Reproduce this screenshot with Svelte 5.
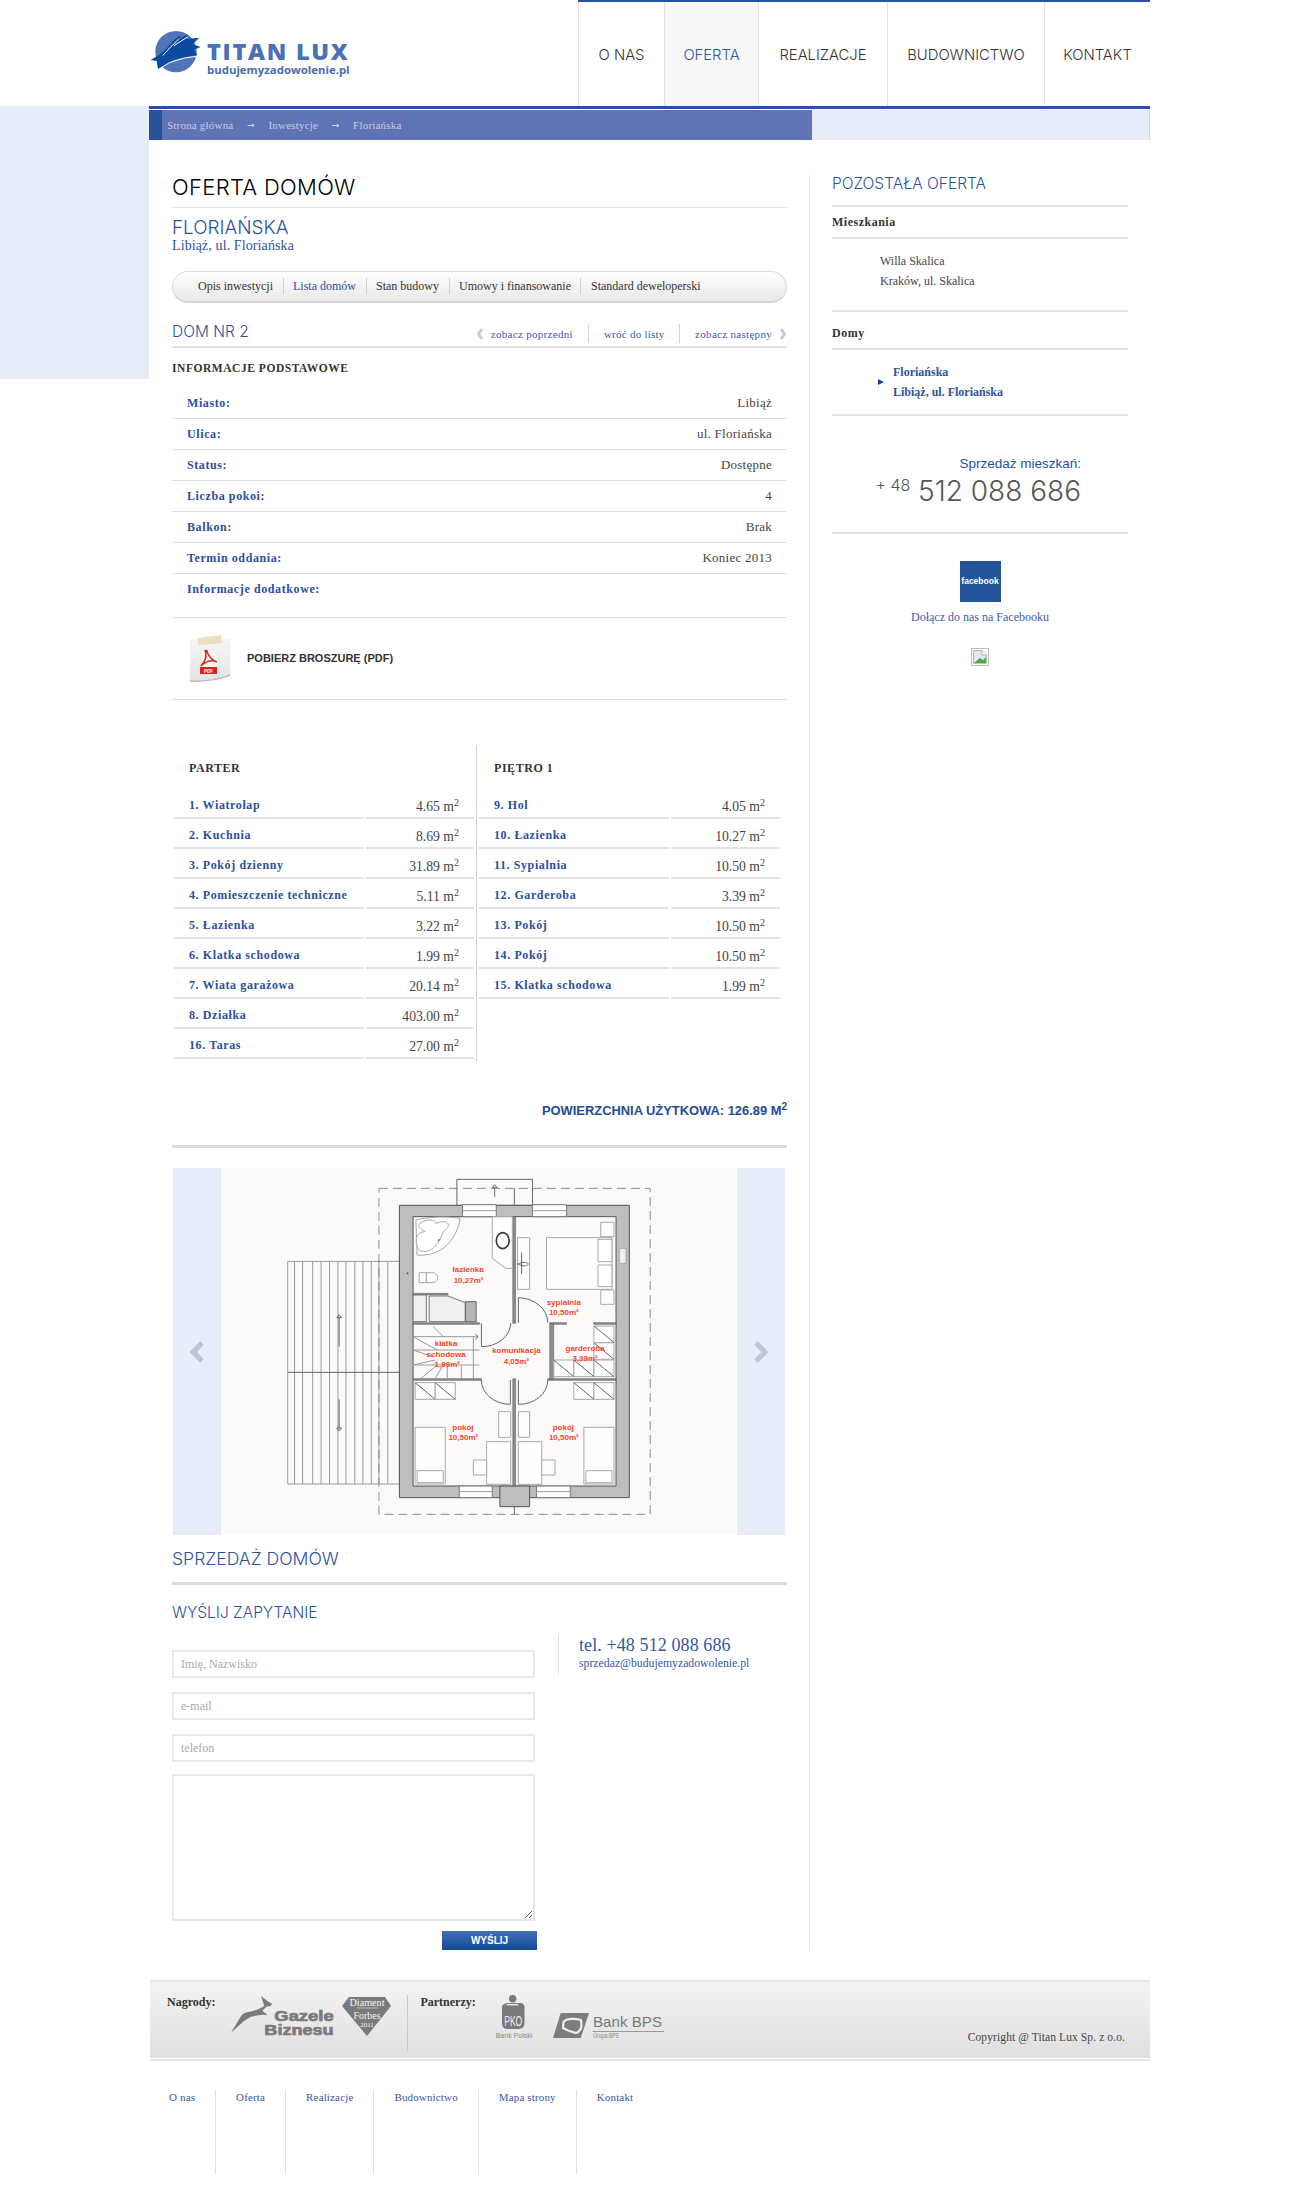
<script>
  const nav = ['O NAS', 'OFERTA', 'REALIZACJE', 'BUDOWNICTWO', 'KONTAKT'];
  const tabs = ['Opis inwestycji', 'Lista domów', 'Stan budowy', 'Umowy i finansowanie', 'Standard deweloperski'];
  const info = [
    ['Miasto:', 'Libiąż'], ['Ulica:', 'ul. Floriańska'], ['Status:', 'Dostępne'],
    ['Liczba pokoi:', '4'], ['Balkon:', 'Brak'], ['Termin oddania:', 'Koniec 2013']
  ];
  const parter = [
    ['1. Wiatrołap', '4.65'], ['2. Kuchnia', '8.69'], ['3. Pokój dzienny', '31.89'],
    ['4. Pomieszczenie techniczne', '5.11'], ['5. Łazienka', '3.22'], ['6. Klatka schodowa', '1.99'],
    ['7. Wiata garażowa', '20.14'], ['8. Działka', '403.00'], ['16. Taras', '27.00']
  ];
  const pietro = [
    ['9. Hol', '4.05'], ['10. Łazienka', '10.27'], ['11. Sypialnia', '10.50'], ['12. Garderoba', '3.39'],
    ['13. Pokój', '10.50'], ['14. Pokój', '10.50'], ['15. Klatka schodowa', '1.99']
  ];
  const floors = [
    { name: 'PARTER', rows: parter, cls: 'first' },
    { name: 'PIĘTRO 1', rows: pietro, cls: 'second' }
  ];
  const footerNav = ['O nas', 'Oferta', 'Realizacje', 'Budownictwo', 'Mapa strony', 'Kontakt'];
  const terrace = [310, 330, 355, 376, 397, 418, 438, 460, 480, 501, 520, 542];
  const planLabels = [
    ['łazienka', 742, 328], ['10,27m²', 743, 360], ['sypialnia', 980, 425], ['10,50m²', 980, 456],
    ['klatka', 687, 549], ['schodowa', 687, 581], ['1,99m²', 690, 613], ['komunikacja', 862, 571],
    ['4,05m²', 862, 602], ['garderoba', 1033, 563], ['3,39m²', 1033, 594], ['pokój', 729, 802],
    ['10,50m²', 730, 832], ['pokój', 979, 800], ['10,50m²', 980, 830]
  ].map(([t, x, y]) => ({ t, x: x / 2.489, y: y / 3 + 3 }));
  const closets = [
    [955, 600], [1005, 600], [1055, 600], [1055, 548], [1055, 498],
    [610, 668], [660, 668], [1005, 668], [1055, 668]
  ];
  const furniture = [
    [937, 233, 163, 155], [1065, 238, 35, 67], [1065, 315, 35, 65], [1072, 187, 33, 43], [1072, 390, 33, 43],
    [865, 233, 30, 155], [1118, 265, 17, 45], [620, 338, 18, 30],
    [610, 802, 75, 170], [615, 932, 65, 36], [1030, 802, 75, 170], [1035, 932, 65, 36],
    [788, 845, 60, 128], [867, 845, 58, 128], [755, 900, 33, 45], [925, 900, 33, 45],
    [818, 755, 30, 77], [867, 755, 28, 77]
  ];
  const walls = [
    [605, 488, 165, 5], [945, 488, 42, 5], [1055, 488, 55, 5], [605, 656, 170, 5], [940, 656, 170, 5],
    [853, 170, 7, 320], [853, 656, 7, 322], [945, 490, 10, 168], [605, 400, 87, 5]
  ];
</script>

<div class="page">
  <header class="top">
    <div class="logo">
      <svg class="mark" viewBox="0 0 180 165" aria-hidden="true">
        <circle cx="78" cy="80" r="62" fill="#4f74b8"/>
        <path d="M2 105 L30 88 L50 70 L72 45 L88 33 L92 40 L112 28 L108 42 L148 38 L128 58 L152 66 L132 74 L142 90 L108 96 L72 104 L42 122 L24 132 L20 108 Z" fill="#0b4a9e"/>
        <path d="M38 92 L62 66 L88 40 M72 62 L112 36 M24 134 L60 112 L104 99 L146 93" fill="none" stroke="#fff" stroke-width="3"/>
      </svg>
      <div class="wordmark">
        <div class="brand">TITAN LUX</div>
        <div class="motto">budujemyzadowolenie.pl</div>
      </div>
    </div>
    <nav class="menu">
      {#each nav as item, i}
        <a href="#top" class:active={i === 1}>{item}</a>
      {/each}
    </nav>
  </header>

  <div class="rule"></div>

  <div class="crumbbar">
    <div class="crumbs">
      <span>Strona główna</span><i>→</i><span>Inwestycje</span><i>→</i><span>Floriańska</span>
    </div>
  </div>

  <div class="content">
    <main class="main">
      <h1>OFERTA DOMÓW</h1>
      <h2>FLORIAŃSKA</h2>
      <p class="address">Libiąż, ul. Floriańska</p>

      <div class="tabs">
        {#each tabs as tab, i}
          <a href="#top" class:current={i === 1}>{tab}</a>
        {/each}
      </div>

      <div class="domhead">
        <h3>DOM NR 2</h3>
        <div class="pager">
          <a href="#top" class="prev">
            <svg width="8" height="12" viewBox="0 0 8 12"><path d="M6 1 L2.5 6 L6 11" fill="none" stroke="#c4ccdc" stroke-width="3"/></svg>
            zobacz poprzedni
          </a>
          <a href="#top" class="back">wróć do listy</a>
          <a href="#top" class="next">
            zobacz następny
            <svg width="8" height="12" viewBox="0 0 8 12"><path d="M2 1 L5.5 6 L2 11" fill="none" stroke="#c4ccdc" stroke-width="3"/></svg>
          </a>
        </div>
      </div>

      <h4 class="infotitle">INFORMACJE PODSTAWOWE</h4>
      {#each info as [label, value]}
        <div class="inforow"><b>{label}</b><span>{value}</span></div>
      {/each}
      <div class="inforow extra"><b>Informacje dodatkowe:</b></div>

      <a href="#top" class="pdf">
        <svg width="42" height="48" viewBox="0 0 42 48" aria-hidden="true">
          <defs>
            <linearGradient id="paper" x1="0" y1="0" x2="0" y2="1">
              <stop offset="0" stop-color="#f6f6f6"/><stop offset="1" stop-color="#e4e4e4"/>
            </linearGradient>
          </defs>
          <path d="M1 4 H41 V40 C32 44 14 47 1 46 Z" fill="url(#paper)"/>
          <path d="M1 46 C14 47 32 44 41 40" fill="none" stroke="#bbb" stroke-width="1.4"/>
          <path d="M9 3 L32 0 L33 8 L9 10 Z" fill="#eadfbe"/>
          <path d="M12 15 H24 L29 20 V33 H12 Z" fill="#fafafa" stroke="#ddd" stroke-width=".6"/>
          <path d="M16 15 C19 22 15 27 12 31 C18 25 24 25 28 27 C22 25 19 20 17.5 15" fill="none" stroke="#d9241c" stroke-width="1.5"/>
          <rect x="11" y="32" width="17" height="7" fill="#d9241c"/>
          <text x="19.5" y="37.8" class="pdftext">PDF</text>
        </svg>
        <span>POBIERZ BROSZURĘ (PDF)</span>
      </a>

      <div class="floors">
        {#each floors as floor}
          <section class="floor {floor.cls}">
            <h4>{floor.name}</h4>
            {#each floor.rows as [label, value]}
              <div class="room"><b>{label}</b><span>{value} m<sup>2</sup></span></div>
            {/each}
          </section>
        {/each}
      </div>

      <div class="total">POWIERZCHNIA UŻYTKOWA: 126.89 M<sup>2</sup></div>

      <div class="slider">
        <div class="side">
          <svg width="16" height="22" viewBox="0 0 16 22"><path d="M13 2 L4 11 L13 20" fill="none" stroke="#b9c5d9" stroke-width="5"/></svg>
        </div>
        <div class="plan">
          <svg width="516" height="367" viewBox="127 24 1284 1101" preserveAspectRatio="none" aria-label="Rzut piętra">
            <g class="soft">
              <rect x="293" y="304" width="278" height="668" class="ln"/>
              {#each terrace as x}<line x1={x} y1="304" x2={x} y2="972" class="ln"/>{/each}
              <line x1="293" y1="637" x2="571" y2="637" class="ln dark"/>
              <path d="M421 470 V560 M415 473 L421 464 L427 473 Z M421 718 V806 M415 804 L421 813 L427 804 Z" class="ln dark"/>
              <rect x="714" y="58" width="188" height="78" class="ln dark"/>
              <path d="M808 110 V82 M802 83 L808 74 L814 83 Z" class="ln dark"/>
              <rect x="520" y="85" width="675" height="978" class="dash"/>
              <line x1="857" y1="85" x2="857" y2="1063" class="ln dark"/>
              <rect x="571" y="136" width="572" height="877" class="wall"/>
              <rect x="605" y="170" width="505" height="808" class="room-floor"/>
              <rect x="728" y="134" width="84" height="36" class="win"/>
              <rect x="902" y="134" width="85" height="36" class="win"/>
              <rect x="720" y="978" width="82" height="35" class="win"/>
              <rect x="912" y="978" width="84" height="35" class="win"/>
              <rect x="821" y="978" width="74" height="62" class="wall"/>
              <line x1="728" y1="152" x2="812" y2="152" class="ln"/>
              <line x1="902" y1="152" x2="987" y2="152" class="ln"/>
              <line x1="720" y1="995" x2="802" y2="995" class="ln"/>
              <line x1="912" y1="995" x2="996" y2="995" class="ln"/>

              {#each walls as [x, y, w, h]}<rect {x} {y} width={w} height={h} class="iw"/>{/each}
              {#each furniture as [x, y, w, h]}<rect {x} {y} width={w} height={h} class="fur"/>{/each}
              {#each closets as [x, y]}
                <rect {x} {y} width="50" height="50" class="fur"/>
                <line x1={x} y1={y} x2={x + 50} y2={y + 50} class="ln dark"/>
              {/each}

              <path d="M612 180 C650 168 700 170 722 175 C716 230 680 292 615 285 Z" class="fur"/>
              <path d="M622 190 C640 172 665 182 662 190 C690 175 705 195 680 215 C665 265 640 285 620 270 C605 240 615 215 635 215 C622 205 615 198 622 190 Z" class="fur"/>
              <path d="M802 170 H852 V325 H835 L802 295 Z" class="fur"/>
              <ellipse cx="828" cy="242" rx="16" ry="24" class="sink"/>
              <path d="M638 338 H655 C670 342 670 364 655 368 H638 Z" class="fur"/>
              <rect x="605" y="405" width="33" height="80" class="grayfur"/>
              <path d="M645 408 H692 L735 428 V485 H645 Z" class="grayfur"/>
              <rect x="735" y="425" width="27" height="60" class="wallfur"/>
              <path d="M875 278 V342 M865 312 C880 305 885 305 892 312 C885 320 880 320 865 312 Z" class="ln dark"/>

              <path d="M605 530 H765 M605 570 H770 M605 615 H770 M605 530 L665 570 M605 570 L655 590 M605 615 L660 600 M625 655 L665 615 M660 655 L680 615 M655 500 L680 530 M690 615 V655 M725 615 V655 M755 530 V655" class="ln"/>
              <path d="M760 523 L767 530 L760 538" class="ln dark"/>

              <path d="M867 413 V488 M867 413 A75 75 0 0 1 940 488" class="ln dark"/>
              <path d="M848 490 A72 72 0 0 1 775 560 V490" class="ln dark"/>
              <path d="M775 660 A72 72 0 0 0 847 733 V660" class="ln dark"/>
              <path d="M867 660 V733 A72 72 0 0 0 940 660" class="ln dark"/>
              <circle cx="591" cy="340" r="2.5" fill="#444"/>
              <circle cx="669" cy="240" r="2" fill="#444"/>
            </g>
            <g transform="scale(2.489 3)">
              {#each planLabels as l}
                <text x={l.x} y={l.y} class="planlabel">{l.t}</text>
              {/each}
            </g>
          </svg>
        </div>
        <div class="side">
          <svg width="16" height="22" viewBox="0 0 16 22"><path d="M3 2 L12 11 L3 20" fill="none" stroke="#b9c5d9" stroke-width="5"/></svg>
        </div>
      </div>

      <h2 class="sales">SPRZEDAŻ DOMÓW</h2>
      <h3 class="ask">WYŚLIJ ZAPYTANIE</h3>

      <div class="contact">
        <form class="form">
          <input type="text" placeholder="Imię, Nazwisko"/>
          <input type="text" placeholder="e-mail"/>
          <input type="text" placeholder="telefon"/>
          <textarea></textarea>
          <button type="button">WYŚLIJ</button>
        </form>
        <div class="reach">
          <div class="tel">tel. +48 512 088 686</div>
          <div class="mail">sprzedaz@budujemyzadowolenie.pl</div>
        </div>
      </div>
    </main>

    <aside class="aside">
      <h3 class="other">POZOSTAŁA OFERTA</h3>
      <div class="group">Mieszkania</div>
      <div class="offer">
        <div>Willa Skalica</div>
        <div>Kraków, ul. Skalica</div>
      </div>
      <div class="group domy">Domy</div>
      <div class="offer now">
        <div>Floriańska</div>
        <div>Libiąż, ul. Floriańska</div>
      </div>

      <div class="sales-phone">
        <div class="sp-label">Sprzedaż mieszkań:</div>
        <div class="sp-num"><small>+ 48</small> 512 088 686</div>
      </div>

      <div class="social">
        <div class="fb">facebook</div>
        <a href="#top">Dołącz do nas na Facebooku</a>
        <svg class="broken" width="18" height="18" viewBox="0 0 18 18" aria-hidden="true">
          <rect x=".5" y=".5" width="17" height="17" fill="#fff" stroke="#c0c0c0"/>
          <path d="M2.5 2.5 H11 L15.5 7 V15.5 H2.5 Z" fill="#dfe8f6" stroke="#a8a8a8" stroke-width=".8"/>
          <path d="M11 2.5 V7 H15.5" fill="#fff" stroke="#a8a8a8" stroke-width=".8"/>
          <path d="M3 15 L9 10 L12 12 L15 9 V15 Z" fill="#4ea93f"/>
        </svg>
      </div>
    </aside>
  </div>

  <section class="awards">
    <b class="al">Nagrody:</b>
    <svg class="gazele" width="104" height="42" viewBox="18 18 312 126" aria-label="Gazele Biznesu">
      <path d="M18 128 L46 82 C52 70 62 66 75 65 L100 58 L118 48 L108 18 L128 34 L142 42 L136 48 L124 50 L112 62 L128 76 L116 74 L100 76 L78 80 L58 92 Z" fill="#7a7a7a"/>
      <text x="148" y="94" textLength="178" lengthAdjust="spacingAndGlyphs" class="gz">Gazele</text>
      <text x="118" y="135" textLength="208" lengthAdjust="spacingAndGlyphs" class="gz">Biznesu</text>
    </svg>
    <svg class="diamond" width="50" height="40" viewBox="0 0 50 40" aria-label="Diament Forbes 2011">
      <path d="M7 1 H43 L49 10 L25 40 L0 10 Z" fill="#7a7a7a"/>
      <text x="25" y="10" textLength="35" lengthAdjust="spacingAndGlyphs" class="dm">Diament</text>
      <rect x="15" y="11.5" width="21" height="1" fill="#bbb"/>
      <text x="25" y="22.5" textLength="27" lengthAdjust="spacingAndGlyphs" class="dm">Forbes</text>
      <text x="25" y="30.5" class="dm small">2011</text>
    </svg>
    <div class="vsep"></div>
    <b class="al partners">Partnerzy:</b>
    <svg class="pko" width="40" height="46" viewBox="0 0 40 46" aria-label="PKO Bank Polski">
      <circle cx="18.7" cy="3.8" r="3.7" fill="#7a7a7a"/>
      <path d="M8 12 C8 9 12 8 14 8 H26 C28 8 30.5 9 30.5 12 V29 C30.5 32 27 34 24 34 H14 C10 34 8 32 8 29 Z" fill="#7a7a7a"/>
      <rect x="12.7" y="9" width="11.6" height="1.4" fill="#eee"/>
      <text x="19.2" y="31" textLength="18" lengthAdjust="spacingAndGlyphs" class="pk">PKO</text>
      <text x="20" y="43" class="bp">Bank Polski</text>
    </svg>
    <svg class="bps" width="111" height="28" viewBox="0 0 111 28" aria-label="Bank BPS">
      <path d="M7.7 0 H36 L27.7 25 H0 Z" fill="#7c7c7c"/>
      <path d="M13 7 C18 5 24 6 28 7 L28.5 13 C28 16 26 19 23 20 L15 17.5 L10 15 L10.5 9 Z" fill="#7c7c7c" stroke="#eee" stroke-width="2.2"/>
      <text x="40" y="14" textLength="69" lengthAdjust="spacingAndGlyphs" class="bk">Bank BPS</text>
      <line x1="39.5" y1="18.5" x2="111" y2="18.5" stroke="#999"/>
      <text x="40" y="25.3" textLength="26" lengthAdjust="spacingAndGlyphs" class="gb">Grupa BPS</text>
    </svg>
    <span class="copy">Copyright @ Titan Lux Sp. z o.o.</span>
  </section>

  <nav class="foot">
    {#each footerNav as item}
      <a href="#top">{item}</a>
    {/each}
  </nav>
</div>

<style>
  :global(body) { margin: 0; background: #fff; }
  .page {
    width: 1305px;
    min-height: 2190px;
    font-family: "Liberation Serif", serif;
    font-size: 12px;
    color: #333;
    background: linear-gradient(#e6edf8, #e6edf8) no-repeat 0 106px / 149px 273px;
    overflow: hidden;
  }
  a { text-decoration: none; color: inherit; }
  h1, h2, h3, h4, p { margin: 0; font-weight: normal; }

  .top { display: flex; justify-content: space-between; height: 106px; width: 1001px; margin-left: 149px; }
  .logo { display: flex; padding-top: 25px; margin-left: 1px; }
  .mark { width: 60px; height: 55px; }
  .wordmark { margin-left: -3px; }
  .brand {
    font: 800 23.5px/22px "Open Sans", sans-serif;
    color: #4a70b5;
    margin-top: 15px;
    letter-spacing: 1.7px;
    white-space: nowrap;
  }
  .motto { font: 700 11.4px/16px "Open Sans", sans-serif; color: #4a6db0; margin-top: 0; white-space: nowrap; }
  .menu {
    display: grid;
    grid-template-columns: 86px 94px 129px 157px 106px;
    width: 572px;
    border-top: 2px solid #2a4f9b;
    box-sizing: border-box;
  }
  .menu a {
    display: flex;
    align-items: center;
    justify-content: center;
    border-left: 1px solid #e3e3e3;
    font: 300 14.8px/1 Inter, sans-serif;
    color: #333;
    padding-top: 2px;
  }
  .menu a.active { background: #f7f7f7; color: #2b55a5; }

  .rule { width: 1001px; height: 3px; margin-left: 149px; background: #2a4f9b; }
  .crumbbar {
    width: 1001px;
    height: 30px;
    margin: 1px 0 0 149px;
    box-sizing: border-box;
    background: #e6edf8;
    border-right: 1px solid #c9d4e6;
  }
  .crumbs {
    width: 663px;
    height: 30px;
    box-sizing: border-box;
    display: flex;
    align-items: center;
    gap: 13.5px;
    background: #5f73b5;
    border-left: 13px solid #2a4f9b;
    padding-left: 5px;
    color: #c6cde4;
    font-size: 11px;
    letter-spacing: .2px;
  }
  .crumbs i { font: normal 9px "DejaVu Sans", sans-serif; width: 8px; text-align: center; color: #dfe4f2; }

  .content { display: flex; width: 1001px; margin-left: 149px; padding-top: 35px; }
  .main { width: 615px; margin-left: 23px; }
  .aside {
    width: 296px;
    margin-left: 22px;
    padding-left: 22px;
    border-left: 1px solid #e3e3e3;
  }

  h1 {
    height: 32px;
    box-sizing: content-box;
    font: 300 22px/25px Inter, sans-serif;
    letter-spacing: .3px;
    color: #000;
    border-bottom: 1px solid #e2e2e2;
    white-space: nowrap;
  }
  h2 {
    margin-top: 10px;
    font: 300 18.9px/20px Inter, sans-serif;
    color: #2b51a0;
  }
  .address { font-size: 14px; line-height: 16px; letter-spacing: .1px; color: #2f52a0; }
  .tabs {
    margin-top: 17px;
    height: 32px;
    box-sizing: border-box;
    display: flex;
    align-items: center;
    padding: 0 0 2px 15px;
    border: 1px solid #dcdcdc;
    border-bottom: 2px solid #d4d4d4;
    border-radius: 16px;
    background: linear-gradient(#fefefe, #e9e9e9);
  }
  .tabs a { padding: 0 9.5px; line-height: 16px; border-left: 1px solid #cfcfcf; color: #333; white-space: nowrap; }
  .tabs a:first-child { border-left: 0; padding-left: 10px; }
  .tabs a.current { color: #2f52a0; }

  .domhead {
    height: 43px;
    display: flex;
    justify-content: space-between;
    border-bottom: 2px solid #e3e3e3;
  }
  .domhead h3 { font: 300 15.5px/20px Inter, sans-serif; color: #2b51a0; margin-top: 19px; }
  .pager { display: flex; margin-top: 21px; height: 19px; font-size: 11px; letter-spacing: .3px; color: #3a5aa8; }
  .pager a { display: flex; align-items: center; line-height: 20px; border-left: 1px solid #d6d6d6; padding: 1px 15px 0; white-space: nowrap; }
  .pager .prev { border-left: 0; padding: 1px 15px 0 0; gap: 7px; }
  .pager .back { padding: 1px 14.5px 0 15px; letter-spacing: .25px; }
  .pager .next { padding-right: 0; gap: 7px; }

  .infotitle {
    font-weight: bold;
    font-size: 11.5px;
    line-height: 16px;
    letter-spacing: .55px;
    color: #333;
    padding-top: 12px;
    height: 28px;
  }
  .inforow {
    height: 31px;
    box-sizing: border-box;
    border-bottom: 1px solid #dedede;
    display: flex;
    justify-content: space-between;
    padding: 7px 15px 0;
    line-height: 16px;
  }
  .inforow b, .room b { color: #2b4f9f; letter-spacing: .6px; font-size: 12px; }
  .inforow span { font-size: 13px; letter-spacing: .25px; color: #444; }
  .inforow.extra { height: 44px; }

  .pdf {
    height: 82px;
    box-sizing: border-box;
    border-bottom: 1px solid #dedede;
    display: flex;
    align-items: center;
    padding: 0 0 0 17px;
    gap: 16px;
  }
  .pdf span { font: bold 11px/1 "Liberation Sans", sans-serif; color: #333; white-space: nowrap; }
  .pdftext { font: bold 4.5px "Liberation Sans", sans-serif; fill: #fff; text-anchor: middle; }

  .floors { display: flex; margin: 45px 0 0 2px; height: 316px; }
  .floor { width: 300px; }
  .floor.first { border-right: 1px solid #d2d2d2; padding-right: 2px; }
  .floor.second { margin-left: 2px; width: 301px; }
  .floor h4 {
    height: 44px;
    box-sizing: border-box;
    padding: 15px 0 0 15px;
    font-weight: bold;
    font-size: 12px;
    line-height: 16px;
    letter-spacing: .55px;
    color: #333;
  }
  .room {
    height: 30px;
    box-sizing: border-box;
    display: flex;
    gap: 2px;
    align-items: stretch;
  }
  .room b {
    width: 190px;
    flex: none;
    box-sizing: border-box;
    border-bottom: 2px solid #e3e3e3;
    padding: 8px 0 0 15px;
    line-height: 16px;
    white-space: nowrap;
  }
  .room span {
    flex: 1;
    box-sizing: border-box;
    border-bottom: 2px solid #e3e3e3;
    text-align: right;
    padding: 10px 15px 0 0;
    font-size: 13.7px;
    line-height: 16px;
    color: #444;
    white-space: nowrap;
  }
  .room sup { font-size: 10px; line-height: 0; vertical-align: 5px; }

  .total {
    height: 87px;
    box-sizing: border-box;
    padding-top: 42px;
    border-bottom: 3px solid #dcdcdc;
    text-align: right;
    font: bold 12.9px/16px "Liberation Sans", sans-serif;
    color: #1f4a99;
  }
  .total sup { font-size: 10px; line-height: 0; vertical-align: 5px; }

  .slider { display: flex; width: 612px; height: 367px; margin: 20px 0 0 1px; }
  .side { width: 48px; background: #e6edf8; display: flex; align-items: center; justify-content: center; }
  .plan { width: 516px; background: #fdf9f8; }
  .plan svg { display: block; }
  .plan rect, .plan line, .plan path, .plan ellipse { vector-effect: non-scaling-stroke; }
  .soft { filter: blur(.3px); }
  .ln { fill: none; stroke: #9a9a9a; stroke-width: 1; }
  .ln.dark { stroke: #666; }
  .dash { fill: none; stroke: #8a8a8a; stroke-width: 1; stroke-dasharray: 9 5; }
  .wall { fill: #bdbdbd; stroke: #555; stroke-width: 1; }
  .room-floor { fill: #fdf9f8; stroke: #555; stroke-width: 1; }
  .win { fill: #fff; stroke: #777; stroke-width: 1; }
  .iw { fill: #8c8c8c; stroke: #555; stroke-width: .5; }
  .fur { fill: #fff; fill-opacity: .75; stroke: #a8a8a8; stroke-width: 1; }
  .grayfur { fill: #f0f0f0; stroke: #777; stroke-width: 1; }
  .wallfur { fill: #b5b5b5; stroke: #666; stroke-width: 1; }
  .sink { fill: #fff; stroke: #333; stroke-width: 1.6; }
  .planlabel { font: bold 8px "Liberation Sans", sans-serif; fill: #f2472a; text-anchor: middle; }

  .sales {
    margin: 0;
    height: 50px;
    box-sizing: border-box;
    padding-top: 14px;
    border-bottom: 3px solid #dcdcdc;
    font-size: 17.6px;
  }
  .ask { padding-top: 18px; font: 300 15.5px/20px Inter, sans-serif; color: #2b51a0; }
  .contact { display: flex; margin-top: 12px; }
  .form { width: 365px; padding-top: 15px; display: flex; flex-direction: column; }
  .form input, .form textarea {
    width: 363px;
    box-sizing: border-box;
    border: 2px solid #e8e8e8;
    padding: 0 7px;
    margin: 0;
    font: 12px "Liberation Serif", serif;
    background: #fff;
  }
  .form input { height: 28px; margin-bottom: 14px; }
  .form input::placeholder { color: #aaa; }
  .form textarea { height: 147px; margin-top: -2px; display: block; }
  .form button {
    align-self: flex-end;
    width: 95px;
    height: 19px;
    margin-top: 10px;
    padding: 0;
    border: 0;
    background: linear-gradient(#4470b7, #0d4a9a);
    color: #fff;
    font: bold 10px/19px "Liberation Sans", sans-serif;
  }
  .reach {
    margin-left: 21px;
    height: 40px;
    padding-left: 20px;
    border-left: 1px solid #dedede;
    color: #3456a5;
  }
  .tel { font-size: 18px; line-height: 20px; letter-spacing: .1px; white-space: nowrap; }
  .mail { font-size: 11.75px; line-height: 18px; white-space: nowrap; }

  .other {
    height: 30px;
    box-sizing: content-box;
    font: 300 15.5px/18px Inter, sans-serif;
    color: #2b51a0;
    border-bottom: 2px solid #e3e3e3;
    white-space: nowrap;
  }
  .group {
    height: 32px;
    box-sizing: border-box;
    padding-top: 7px;
    line-height: 16px;
    font-weight: bold;
    letter-spacing: .5px;
    border-bottom: 2px solid #e3e3e3;
    color: #333;
  }
  .group.domy { height: 38px; padding-top: 13px; }
  .offer {
    height: 73px;
    box-sizing: border-box;
    padding: 12px 0 0 48px;
    line-height: 20px;
    color: #444;
    border-bottom: 2px solid #e3e3e3;
  }
  .offer.now {
    height: 66px;
    padding: 12px 0 0 61px;
    font-weight: bold;
    color: #2f52a0;
    position: relative;
  }
  .offer.now::before {
    content: "";
    position: absolute;
    left: 46px;
    top: 29px;
    border-left: 6px solid #0b4a9e;
    border-top: 3.5px solid transparent;
    border-bottom: 3.5px solid transparent;
  }
  .sales-phone {
    height: 118px;
    box-sizing: border-box;
    padding: 40px 47px 0 0;
    text-align: right;
    border-bottom: 2px solid #e3e3e3;
  }
  .sp-label { font: 13.5px/16px "Liberation Sans", sans-serif; color: #1f4f9e; }
  .sp-num { font: 300 28px/26px Inter, sans-serif; color: #555; white-space: nowrap; }
  .sp-num small { font-size: 16px; vertical-align: 10px; margin-right: 0; }
  .social { display: flex; flex-direction: column; align-items: center; padding-top: 27px; }
  .fb {
    width: 41px;
    height: 41px;
    background: #24559a;
    color: #fff;
    font: bold 8.5px/41px "Liberation Sans", sans-serif;
    text-align: center;
  }
  .social a { margin-top: 7px; line-height: 16px; font-size: 12px; color: #3f5cad; }
  .broken { margin-top: 23px; }

  .awards {
    width: 1000px;
    height: 81px;
    margin: 30px 0 0 150px;
    box-sizing: border-box;
    border-top: 2px solid #e6e6e6;
    border-bottom: 2px solid #e6e6e6;
    background: linear-gradient(#f3f3f3, #dfdfdf);
    box-shadow: inset 0 -1px 0 #fff;
    display: flex;
    align-items: flex-start;
    padding: 14px 25px 0 17px;
  }
  .al { font-size: 12px; line-height: 16px; color: #333; white-space: nowrap; margin-top: -2px; }
  .gazele { margin-left: 16px; flex: none; }
  .gz { font: bold 42px "Liberation Sans", sans-serif; fill: #7a7a7a; stroke: #7a7a7a; stroke-width: 2; }
  .diamond { margin-left: 7px; flex: none; }
  .dm { font: 11px "Liberation Serif", serif; fill: #f4f4f4; text-anchor: middle; }
  .dm.small { font-size: 7px; }
  .vsep { width: 1px; height: 56px; margin: -1px 0 0 15px; background: #c8c8c8; }
  .partners { margin-left: 12px; }
  .pko { margin: -1px 0 0 18px; flex: none; }
  .pk { font: 14px "Liberation Sans", sans-serif; fill: #eee; text-anchor: middle; }
  .bp { font: 7px "Liberation Sans", sans-serif; fill: #888; text-anchor: middle; }
  .bps { margin: 17px 0 0 19px; flex: none; }
  .bk { font: 15px "Liberation Sans", sans-serif; fill: #777; }
  .gb { font: 6.5px "Liberation Sans", sans-serif; fill: #888; }
  .copy { margin: 33px 0 0 auto; line-height: 16px; font-size: 11.5px; letter-spacing: .1px; color: #444; white-space: nowrap; }

  .foot { display: flex; margin: 29px 0 0 149px; height: 84px; }
  .foot a {
    padding: 0 20px;
    border-right: 1px solid #e3e3e3;
    line-height: 14px;
    font-size: 11px;
    letter-spacing: .15px;
    color: #3b55a5;
    white-space: nowrap;
  }
  .foot a:last-child { border-right: 0; }
</style>
